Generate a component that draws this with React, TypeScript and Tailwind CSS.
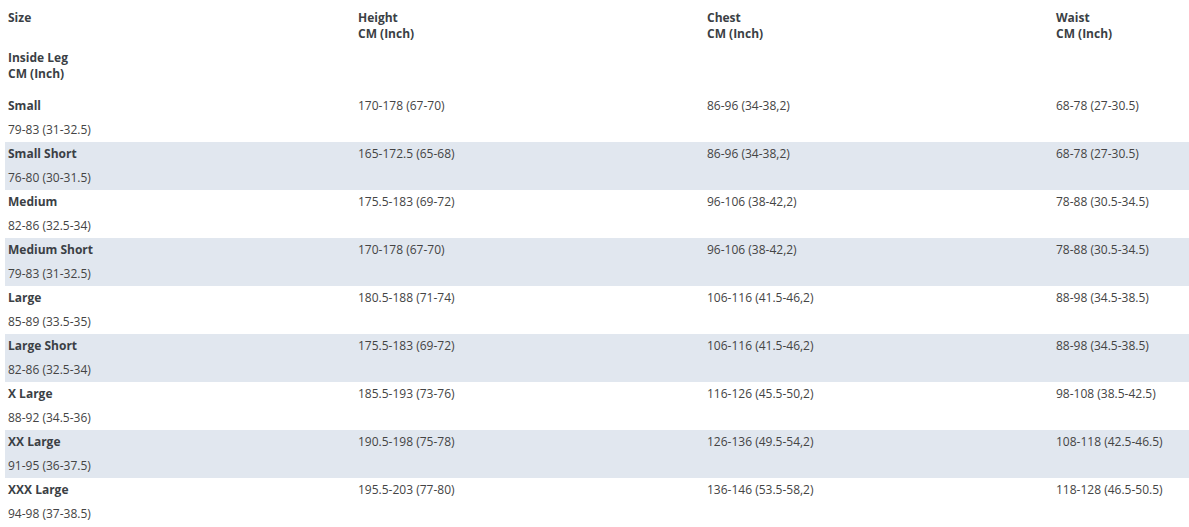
const rows = [
  ['Small', '170-178 (67-70)', '86-96 (34-38,2)', '68-78 (27-30.5)', '79-83 (31-32.5)'],
  ['Small Short', '165-172.5 (65-68)', '86-96 (34-38,2)', '68-78 (27-30.5)', '76-80 (30-31.5)'],
  ['Medium', '175.5-183 (69-72)', '96-106 (38-42,2)', '78-88 (30.5-34.5)', '82-86 (32.5-34)'],
  ['Medium Short', '170-178 (67-70)', '96-106 (38-42,2)', '78-88 (30.5-34.5)', '79-83 (31-32.5)'],
  ['Large', '180.5-188 (71-74)', '106-116 (41.5-46,2)', '88-98 (34.5-38.5)', '85-89 (33.5-35)'],
  ['Large Short', '175.5-183 (69-72)', '106-116 (41.5-46,2)', '88-98 (34.5-38.5)', '82-86 (32.5-34)'],
  ['X Large', '185.5-193 (73-76)', '116-126 (45.5-50,2)', '98-108 (38.5-42.5)', '88-92 (34.5-36)'],
  ['XX Large', '190.5-198 (75-78)', '126-136 (49.5-54,2)', '108-118 (42.5-46.5)', '91-95 (36-37.5)'],
  ['XXX Large', '195.5-203 (77-80)', '136-146 (53.5-58,2)', '118-128 (46.5-50.5)', '94-98 (37-38.5)'],
];

const cols = 'grid grid-cols-[350px_349px_349px_1fr]';

function HeadCell({ title }: { title: string }) {
  return (
    <div className="px-[3px]">
      <div>{title}</div>
      {title !== 'Size' && <div>CM (Inch)</div>}
    </div>
  );
}

export default function App() {
  return (
    <div
      className="bg-white min-h-screen pl-[5px] text-[12px] text-[#444444]"
      style={{ fontFamily: '"Open Sans", "Liberation Sans", sans-serif' }}
    >
      {/* Шапка */}
      <div className="font-bold text-[#3b3f45] leading-4 pt-[10px] pb-[12px]">
        <div className={cols}>
          <HeadCell title="Size" />
          <HeadCell title="Height" />
          <HeadCell title="Chest" />
          <HeadCell title="Waist" />
        </div>
        <div className="px-[3px] mt-2">
          <div>Inside Leg</div>
          <div>CM (Inch)</div>
        </div>
      </div>

      {rows.map((r, i) => (
        <div key={r[0]} className={i % 2 === 1 ? 'bg-[#e1e7ef]' : ''}>
          <div className={`${cols} leading-6`}>
            <div className="px-[3px] font-bold text-[#3b3f45]">{r[0]}</div>
            <div className="px-[3px]">{r[1]}</div>
            <div className="px-[3px]">{r[2]}</div>
            <div className="px-[3px]">{r[3]}</div>
          </div>
          <div className="px-[3px] leading-6">{r[4]}</div>
        </div>
      ))}
    </div>
  );
}
